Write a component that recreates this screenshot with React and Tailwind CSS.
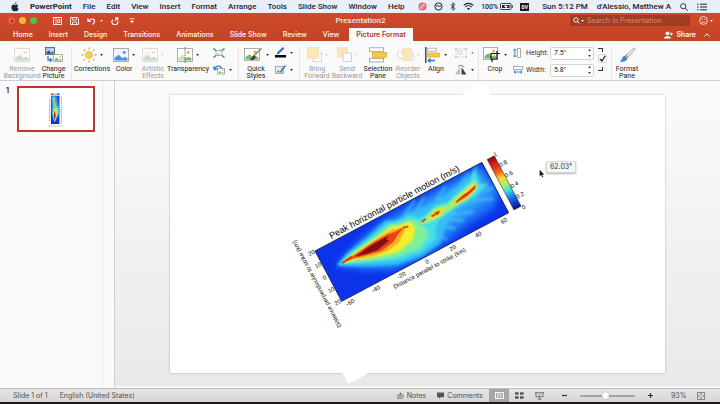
import React, { useState } from "react";

const FONT = "font-['Inter','Liberation_Sans',sans-serif]";

/* ---------- small glyphs ---------- */

function Caret({ className = "" }) {
  return (
    <svg viewBox="0 0 4 3" className={`h-[2px] w-[3px] shrink-0 ${className}`} fill="currentColor" aria-hidden="true">
      <path d="M0 0h4L2 3z" />
    </svg>
  );
}

function Svg({ w, h, className = "", children }) {
  return (
    <svg width={w} height={h} viewBox={`0 0 ${w} ${h}`} className={`shrink-0 ${className}`} fill="none" aria-hidden="true">
      {children}
    </svg>
  );
}

function AppleLogo() {
  return (
    <Svg w={8} h={10}>
      <path
        d="M5.4.3c0 1-.7 1.9-1.7 2C3.600 1.300 4.500.4 5.400.3zM4 2.900c.5 0 .9-.5 1.700-.5.600 0 1.200.3 1.600.8-1.400.9-1.200 2.900.3 3.500-.4 1.200-1.200 2.500-2.100 2.500-.5 0-.8-.3-1.400-.3s-.9.3-1.400.3C1.600 9.200.4 7.200.4 5.300c0-1.800 1.100-2.900 2.200-2.900.6 0 1 .5 1.400.5z"
        fill="#1d2733"
      />
    </Svg>
  );
}

function Landscape({ x = 0, y = 0, w = 15, h = 13, sky = "#fff", hill = "#7db867", sun = "#e9b73c", edge = "#9a9a9a" }) {
  return (
    <g transform={`translate(${x} ${y})`}>
      <rect x=".5" y=".5" width={w - 1} height={h - 1} fill={sky} stroke={edge} strokeWidth=".8" />
      <path d={`M1.500 ${h - 1.5}V${h * 0.7}L${w * 0.36} ${h * 0.48}L${w * 0.58} ${h * 0.74}L${w * 0.76} ${h * 0.62}L${w - 1.5} ${h * 0.76}V${h - 1.5}z`} fill={hill} />
      <circle cx={w * 0.7} cy={h * 0.32} r={w * 0.09} fill={sun} />
    </g>
  );
}

const icons = {
  removeBg: (
    <Svg w={16} h={16}>
      <Landscape y={1} w={16} h={14} />
      <path d="M8 0v16" stroke="#888" strokeWidth=".7" strokeDasharray="1 1" />
    </Svg>
  ),
  change: (
    <Svg w={18} h={16}>
      <Landscape x={0} y={0} w={10} h={8} sky="#9fc6ec" hill="#2b3440" sun="#fff" edge="#555" />
      <Landscape x={8} y={7} w={10} h={8} hill="#69ad52" />
      <path d="M3 9v4h3M4.800 11.200L6.800 13L4.800 14.800" stroke="#2f7fd0" strokeWidth="1.300" />
    </Svg>
  ),
  sun: (
    <Svg w={16} h={16}>
      <circle cx="8" cy="8" r="3.400" fill="#f7cf5f" stroke="#e5ad35" strokeWidth=".8" />
      <g stroke="#e5ad35" strokeWidth="1.300">
        <path d="M8 .5v2M8 13.500v2M.5 8h2M13.500 8h2M2.700 2.700l1.400 1.400M11.900 11.900l1.400 1.400M2.700 13.300l1.400-1.400M11.900 4.100l1.400-1.400" />
      </g>
    </Svg>
  ),
  color: (
    <Svg w={16} h={16}>
      <Landscape y={1} w={16} h={14} sky="#eef5fc" hill="#4a90e2" sun="#4a90e2" />
    </Svg>
  ),
  artistic: (
    <Svg w={16} h={16}>
      <Landscape y={1} w={16} h={14} />
      <path d="M8 0v16M2 6h5M2 8h3" stroke="#888" strokeWidth=".7" strokeDasharray="1 1" />
    </Svg>
  ),
  transparency: (
    <Svg w={16} h={16}>
      <Landscape y={1} w={16} h={14} />
      <rect x="1" y="2" width="7" height="12" fill="#fff" opacity=".6" />
      <path d="M8 0v16" stroke="#444" strokeWidth=".8" strokeDasharray="1.500 1" />
    </Svg>
  ),
  compress: (
    <Svg w={12} h={10}>
      <Landscape x={2.5} y={2} w={7} h={6} />
      <path d="M.5.500l2.500 2M11.500.500L9 2.500M.5 9.500L3 7.500M11.500 9.500L9 7.500" stroke="#2f74b8" strokeWidth="1.200" />
    </Svg>
  ),
  reset: (
    <Svg w={12} h={11}>
      <Landscape x={4} y={4} w={8} h={6.5} />
      <path d="M1.500 5.500C2 1.800 7 .8 8.500 4M.5 2.500l1 3.300 3-1.300" stroke="#2f7fd0" strokeWidth="1.300" />
    </Svg>
  ),
  quick: (
    <Svg w={19} h={16}>
      <Landscape y={1} w={16} h={13} />
      <path d="M17.500 1.500L9.500 9" stroke="#8c8c8c" strokeWidth="1.700" />
      <path d="M10.200 8.200c-2 .2-2 3.200-4.700 4.500 2.600 1 6 0 6.200-3z" fill="#3b3f46" />
    </Svg>
  ),
  border: (
    <Svg w={11} h={11}>
      <path d="M8.700.8L3 6" stroke="#2f74b8" strokeWidth="2.200" />
      <path d="M3.500 5L1.500 7.500l2.800-1z" fill="#333" />
      <rect y="8" width="11" height="2.500" fill="#050505" />
    </Svg>
  ),
  effects: (
    <Svg w={11} h={11}>
      <Landscape x={0} y={2} w={9} h={8} sky="#e4effa" />
      <path d="M10.500 1.500L5.500 8" stroke="#3d78b3" strokeWidth="1.500" />
    </Svg>
  ),
  bring: (
    <Svg w={15} h={15}>
      <rect x="6" y="6" width="8.500" height="8.500" fill="#fff" stroke="#888" strokeWidth=".8" />
      <rect x=".5" y=".5" width="11" height="11" fill="#f6cf5a" stroke="#e2b13c" strokeWidth=".6" />
    </Svg>
  ),
  send: (
    <Svg w={15} h={15}>
      <rect x=".5" y=".5" width="10" height="10" fill="#f6cf5a" stroke="#e2b13c" strokeWidth=".6" />
      <rect x="6" y="6" width="8.500" height="8.500" fill="#fff" stroke="#777" strokeWidth=".8" />
    </Svg>
  ),
  selection: (
    <Svg w={18} h={16}>
      <rect x=".5" y=".8" width="14" height="3.500" fill="#fff" stroke="#999" strokeWidth=".8" />
      <rect x=".5" y="11.500" width="14" height="3.500" fill="#fff" stroke="#999" strokeWidth=".8" />
      <rect x="3.500" y="5.300" width="14" height="5" fill="#f6c948" stroke="#dda52a" strokeWidth=".7" />
    </Svg>
  ),
  reorder: (
    <Svg w={17} h={16}>
      <rect x=".5" y="4.500" width="8" height="7" rx="2" fill="#fff" stroke="#888" strokeWidth=".8" />
      <rect x="13" y="5" width="3.500" height="8" fill="#fff" stroke="#888" strokeWidth=".7" />
      <rect x="5.500" y="1.500" width="9" height="12" fill="#f6cf5a" stroke="#e2b13c" strokeWidth=".6" />
    </Svg>
  ),
  align: (
    <Svg w={16} h={16}>
      <path d="M.8 0v16" stroke="#222" strokeWidth="1.200" />
      <rect x="2.500" y="1.200" width="9" height="3" fill="#fff" stroke="#aaa" strokeWidth=".8" />
      <rect x="2.500" y="6" width="12" height="4" fill="#f6c948" stroke="#dda52a" strokeWidth=".6" />
      <path d="M10 13.500H3.500M5.500 11.500l-2.300 2 2.300 2" stroke="#2f7fd0" strokeWidth="1.300" />
    </Svg>
  ),
  group: (
    <Svg w={12} h={10}>
      <rect x="1" y="1" width="10" height="8" stroke="#888" strokeWidth=".8" strokeDasharray="1.500 1" />
      <rect x="3" y="3" width="4" height="3" stroke="#888" strokeWidth=".7" />
      <path d="M0 0h2v2H0zM10 0h2v2h-2zM0 8h2v2H0zM10 8h2v2h-2z" fill="#999" />
    </Svg>
  ),
  rotate: (
    <Svg w={12} h={10}>
      <path d="M0 9.500h5V2z" fill="#b9bcc0" />
      <path d="M6.500 9.500h5L6.500 2z" fill="#3d4248" />
      <path d="M3 1.500C5 0 7.500 0 9 2" stroke="#2f7fd0" strokeWidth=".9" />
    </Svg>
  ),
  crop: (
    <Svg w={18} h={17}>
      <Landscape y={1} w={15} h={13} />
      <path d="M7.500 7.500h9.500M8 7v6h6V5M9 13v3" stroke="#111" strokeWidth="1.200" />
    </Svg>
  ),
  heightArrow: (
    <Svg w={8} h={10}>
      <path d="M1.800 1v8M.3 2.600L1.800.9l1.500 1.700M.3 7.400l1.500 1.700 1.500-1.700" stroke="#2f74b8" strokeWidth=".9" />
      <rect x="4.500" y=".5" width="3" height="9" fill="#fff" stroke="#999" strokeWidth=".8" />
    </Svg>
  ),
  widthArrow: (
    <Svg w={10} h={8}>
      <rect x=".5" y=".5" width="9" height="3" fill="#fff" stroke="#999" strokeWidth=".8" />
      <path d="M1 6h8M2.600 4.500L.9 6l1.700 1.500M7.400 4.500L9.100 6 7.400 7.500" stroke="#2f74b8" strokeWidth=".9" />
    </Svg>
  ),
  brush: (
    <Svg w={17} h={16}>
      <path d="M15.500.8c1 .5.600 1.500-1 3.300L9.300 10 7 8z" fill="#eef1f4" stroke="#84888d" strokeWidth=".7" />
      <path d="M7.200 7.500l2.500 2.300-1.500 1.500L5.500 9z" fill="#e6a23c" />
      <path d="M5.600 8.700l2.800 2.600C8.200 14 4 15.600.8 14.600 3.300 13.400 2.700 9.500 5.600 8.700z" fill="#3f86d0" />
    </Svg>
  ),
};

/* ---------- plot ---------- */

const JET = [
  ["0", "#8a0d0a"],
  ["0.12", "#d91c12"],
  ["0.28", "#f9571a"],
  ["0.4", "#fbd92b"],
  ["0.54", "#a5f26a"],
  ["0.66", "#35dcf2"],
  ["0.8", "#1769f5"],
  ["1", "#06108f"],
];

const X_TICKS = ["-60", "-40", "-20", "0", "20", "40", "60"];
const Y_TICKS = ["20", "10", "0", "10", "20"];
const SCALE_TICKS = ["1", "0.8", "0.6", "0.4", "0.2", "0"];

function PlotLabels() {
  return (
    <>
      <text x="93" y="-3" fontSize="9" textAnchor="middle">Peak horizontal particle motion (m/s)</text>
      <g fontSize="6" textAnchor="middle">
        {X_TICKS.map((t, i) => (
          <text key={t} x={7 + i * 29} y="64">{t}</text>
        ))}
        <text x="93" y="71">Distance parallel to strike (km)</text>
        {Y_TICKS.map((t, i) => (
          <text key={i} x="-4" y={2 + i * 14}>{t}</text>
        ))}
        <text transform="translate(-12 30) rotate(-90)">Distance perpendicular to strike (km)</text>
      </g>
      <g fontSize="6">
        {SCALE_TICKS.map((t, i) => (
          <text key={t} x="203" y={1 + i * 12}>{t}</text>
        ))}
      </g>
    </>
  );
}

/* At thumbnail size the labels are only specks. */
function PlotSpecks() {
  return (
    <g stroke="#333" strokeWidth="5" strokeDasharray="7 6" opacity=".7">
      <path d="M20 -10H166" />
      <path d="M4 70H182" />
      <path d="M-14 -14V74" />
    </g>
  );
}

function MotionPlot({ id, labelled }) {
  return (
    <g fontFamily="'Liberation Sans', sans-serif" fill="#050505">
      <defs>
        <clipPath id={`${id}-clip`}>
          <rect width="189" height="57" />
        </clipPath>
        <linearGradient id={`${id}-jet`} x1="0" y1="0" x2="0" y2="1">
          {JET.map(([o, c]) => (
            <stop key={o} offset={o} stopColor={c} />
          ))}
        </linearGradient>
        <filter id={`${id}-b5`} x="-30%" y="-60%" width="160%" height="220%">
          <feGaussianBlur stdDeviation="3.500" />
        </filter>
        <filter id={`${id}-b2`} x="-30%" y="-60%" width="160%" height="220%">
          <feGaussianBlur stdDeviation="1.600" />
        </filter>
        <filter id={`${id}-b1`} x="-30%" y="-60%" width="160%" height="220%">
          <feGaussianBlur stdDeviation="1" />
        </filter>
        <filter id={`${id}-b0`} x="-30%" y="-60%" width="160%" height="220%">
          <feGaussianBlur stdDeviation=".4" />
        </filter>
      </defs>
      <rect x="-33" y="-69" width="262" height="202" fill="#fff" />

      <g clipPath={`url(#${id}-clip)`}>
        <rect width="189" height="57" fill="#0c32ea" />
        <g filter={`url(#${id}-b5)`}>
          <path d="M12 23L40 12L72 5L100 3L130 3L160 2L186 1L192 34L178 46L150 48L125 53L95 57L60 54L35 40z" fill="#1b74f7" />
          <path d="M100 12L130 8L160 8L184 6L184 32L160 38L130 42L104 50z" fill="#2d9df6" />
        </g>
        <g filter={`url(#${id}-b2)`}>
          <path d="M12 23L28 17L52 12L76 6L86 10L104 10L120 13L140 12L158 9L180 5L178 22L166 31L146 30L134 35L124 42L114 52L92 55L66 51L42 40L22 29z" fill="#33bdf7" />
          <path d="M116 30L134 46M122 28L146 43M128 28L158 40M110 32L122 52M160 27L182 38M168 23L187 28" stroke="#41bdf6" strokeWidth="2.400" />
          <path d="M92 12L112 2M100 16L122 4M126 15L146 4M150 14L172 3M172 14L182 1" stroke="#39b6f7" strokeWidth="2.400" />
        </g>
        <g filter={`url(#${id}-b1)`}>
          <path d="M14 23L30 18L56 14L78 9L84 12L100 13L108 20L118 19L128 16L140 19L152 15L168 12L179 2L177 18L185 22L164 27L148 27L134 29L124 31L117 36L113 46L94 51L68 47L46 37L26 28z" fill="#46e0e4" />
          <path d="M17 23L34 19L60 15L79 12L86 15L100 17L108 25L108 40L92 47L68 43L44 35L26 27z" fill="#7cf09a" />
          <path d="M104 26L114 22L126 18.500L138 21L150 18L164 15L175 12L172 21L158 26L142 27L128 28.500L114 28z" fill="#9bf075" />
        </g>
        <g filter={`url(#${id}-b1)`}>
          <path d="M18 23L36 20L60 17L79 14L86 17L97 18L100 26L92 36L74 40L54 35L34 28z" fill="#f5ee2e" />
          <path d="M114 25L124 20.500L135 22L129 27L120 27zM141 24L154 19L172 14.500L174 19L160 25z" fill="#f9e22b" />
        </g>
        <g filter={`url(#${id}-b0)`}>
          <path d="M18 22.500L36 21L58 18.500L78 17L82 19L92 20L88 25L78 32L64 34L50 32L36 27.500L31 24.500z" fill="#fba41c" opacity=".8" />
          <path d="M19 23.500L34 22L56 19.500L72 19.200L79 20.500L90 20.500L82 24L73 29L58 31L42 27.500L32 25z" fill="#ee3f14" />
          <path d="M119 24.500L124 22L130 23L126 25.500zM145 23.500L156 20.500L164 19L173 16.500L171 20L158 23.500z" fill="#ef5a18" />
          <path d="M108 24.500l5-1.200M89 21l5 1M119 24l3 .5M124 24l4-.5M148 23l12-2.500M160 21.500l11-2.500M18 23.500l12-1.500" stroke="#cf2210" strokeWidth="1.300" />
          <path d="M33 23.800L45 22L56 21L72 21L68 23.500L71 25.500L56 28.500L44 26.800z" fill="#860f0c" />
          <path d="M31 25.500l3 4M104 24l5 5M109 28l7 6M115 29l8 7M122 29l9 6" stroke="#2fc8f2" strokeWidth=".8" opacity=".8" />
        </g>
      </g>
      <rect width="189" height="57" fill="none" stroke="#10143c" strokeWidth=".8" />
      <rect x="195" width="8" height="57" fill={`url(#${id}-jet)`} stroke="#222" strokeWidth=".5" />
      {labelled ? <PlotLabels /> : <PlotSpecks />}
    </g>
  );
}

/* ---------- bars ---------- */

function MenuBar() {
  const menus = ["File", "Edit", "View", "Insert", "Format", "Arrange", "Tools", "Slide Show", "Window", "Help"];
  return (
    <header className="flex h-[13px] shrink-0 items-center justify-between bg-[#e9eff6] pl-[11px] pr-[13px] font-['Roboto','Liberation_Sans',sans-serif] text-[8px] leading-[12px] text-[#1c2430]">
      <nav className="flex items-center gap-[11px] whitespace-nowrap" aria-label="Menu bar">
        <AppleLogo />
        <button className="font-bold">PowerPoint</button>
        {menus.map((m) => (
          <button key={m} className="font-medium">{m}</button>
        ))}
      </nav>
      <div className="flex items-center gap-[9px] whitespace-nowrap font-medium">
        <div className="flex items-center gap-[7px] pr-[4px]">
          <Svg w={9} h={9}>
            <circle cx="4.500" cy="4.500" r="4" fill="#e0636a" />
            <path d="M2.500 6.500c0-3 1-4 4-4M4 7c0-2.200.7-3 3-3" stroke="#fff" strokeWidth=".8" />
          </Svg>
          <Svg w={9} h={9}>
            <circle cx="4.500" cy="4.500" r="3.600" stroke="#222" strokeWidth="1" />
            <path d="M2 4c2-1 3 1 5 0" stroke="#222" strokeWidth="1" />
          </Svg>
          <Svg w={6} h={9}>
            <path d="M.8 2.500l4 4L3 8.300V.7l1.800 1.800-4 4" stroke="#222" strokeWidth=".9" />
          </Svg>
          <Svg w={11} h={9}>
            <path d="M.7 3.300c2.700-2.600 7-2.600 9.600 0M2.400 5c1.800-1.700 4.500-1.700 6.200 0" stroke="#222" strokeWidth="1.100" />
            <path d="M3.900 6.400c1-.9 2.300-.9 3.200 0L5.500 8.100z" fill="#222" />
          </Svg>
          <span className="flex items-center gap-[2px]">
            <span className="text-[7px]">100%</span>
            <Svg w={13} h={7}>
              <rect x=".5" y=".5" width="10.500" height="6" rx="1" stroke="#222" strokeWidth=".9" />
              <rect x="2" y="2" width="7.500" height="3" fill="#222" />
              <path d="M12.300 2.300v2.400" stroke="#222" />
              <path d="M6.500 0L4 4h1.600L5 7l3-4H6.200z" fill="#e9eff6" />
            </Svg>
          </span>
          <span className="flex h-[8px] w-[9px] items-center justify-center bg-[#15181d] text-[5px] font-bold text-white">DV</span>
        </div>
        <span>Sun 5:12 PM</span>
        <span>d'Alessio, Matthew A</span>
        <Svg w={8} h={8}>
          <circle cx="3.200" cy="3.200" r="2.600" stroke="#222" strokeWidth=".9" />
          <path d="M5.200 5.200l2.500 2.500" stroke="#222" strokeWidth="1" />
        </Svg>
        <Svg w={10} h={8}>
          <path d="M3 1.200h7M3 4h7M3 6.800h7M0 1.200h1.500M0 4h1.500M0 6.800h1.500" stroke="#222" strokeWidth="1" />
        </Svg>
      </div>
    </header>
  );
}

function TitleBar() {
  return (
    <div className="grid h-[15px] shrink-0 grid-cols-[1fr_auto_1fr] items-center pl-[8px] pr-[7px] text-white">
      <div className="flex items-center">
        <div className="flex gap-[4px]">
          <button aria-label="Close" className="flex h-[7px] w-[7px] items-center justify-center rounded-full bg-[#f0544c]">
            <span className="h-[2px] w-[2px] rounded-full bg-[#7d1610]" />
          </button>
          <button aria-label="Minimise" className="h-[7px] w-[7px] rounded-full bg-[#f5b73c]" />
          <button aria-label="Zoom window" className="h-[7px] w-[7px] rounded-full bg-[#4fc33f]" />
        </div>
        <div className="ml-[16px] flex items-center gap-[8px]">
          <button aria-label="Panel">
            <Svg w={9} h={8}>
              <rect x=".5" y=".5" width="8" height="7" stroke="#fff" strokeWidth=".9" />
              <path d="M3 .5v7M4.800 2.500h2v3h-2z" stroke="#fff" strokeWidth=".8" />
            </Svg>
          </button>
          <button aria-label="Save">
            <Svg w={9} h={8}>
              <path d="M.5.500h7l1 1v6h-8z" stroke="#fff" strokeWidth=".9" />
              <path d="M2.500.500v2.500h4V.500M2.500 7.500V5h4v2.500" stroke="#fff" strokeWidth=".8" />
            </Svg>
          </button>
          <button aria-label="Undo" className="flex items-center gap-[4px]">
            <Svg w={9} h={8}>
              <path d="M1 1.500v3h3M1.300 4.300C3.500 1 7.500 1.500 7.500 4.200c0 1.500-1 2.500-2 3.200" stroke="#fff" strokeWidth="1.200" />
            </Svg>
            <Caret />
          </button>
          <button aria-label="Redo">
            <Svg w={8} h={8}>
              <path d="M1.800 2.700A3 3 0 1 0 6.800 4M4 .7h2.700v2.600M6.500 1L4 3.500" stroke="#fff" strokeWidth="1.100" />
            </Svg>
          </button>
          <button aria-label="Customise toolbar" className="ml-[2px]">
            <Svg w={6} h={6}>
              <path d="M.5.800h5" stroke="#fff" strokeWidth=".8" />
              <path d="M1 2.800h4L3 5.200z" fill="#fff" />
            </Svg>
          </button>
        </div>
      </div>
      <h1 className="font-['Roboto','Liberation_Sans',sans-serif] text-[8px] leading-[12px] font-medium text-[#fbe6e0]">Presentation2</h1>
      <div className="flex items-center justify-end gap-[9px]">
        <label className="flex h-[11px] w-[120px] items-center gap-px bg-[#a33b22] pl-[3px]">
          <Svg w={7} h={7}>
            <circle cx="2.900" cy="2.900" r="2.200" stroke="#fff" strokeWidth=".9" />
            <path d="M4.500 4.500l2 2" stroke="#fff" strokeWidth=".9" />
          </Svg>
          <Caret />
          <input
            type="search"
            aria-label="Search in Presentation"
            placeholder="Search in Presentation"
            className="ml-[2px] min-w-0 flex-1 bg-transparent text-[7px] leading-[10px] text-white outline-none placeholder:text-[#d68d7b]"
          />
        </label>
        <button aria-label="Feedback" className="flex items-center gap-[2px]">
          <Svg w={9} h={9}>
            <circle cx="4.500" cy="4.500" r="3.900" stroke="#fff" strokeWidth=".8" />
            <path d="M2.700 5.500c.8 1.300 2.800 1.300 3.600 0M3.200 3v1M5.800 3v1" stroke="#fff" strokeWidth=".8" />
          </Svg>
          <Caret />
        </button>
      </div>
    </div>
  );
}

function TabStrip({ active, onSelect }) {
  const tabs = ["Home", "Insert", "Design", "Transitions", "Animations", "Slide Show", "Review", "View", "Picture Format"];
  return (
    <div className="flex h-[13px] shrink-0 items-stretch justify-between pl-[5px] pr-[10px] text-[7px] leading-[12px] font-medium text-[#fff6f3]">
      <div role="tablist" className="flex whitespace-nowrap">
        {tabs.map((t) => (
          <button
            key={t}
            role="tab"
            aria-selected={t === active}
            onClick={() => onSelect(t)}
            className={t === active ? "ml-[2px] bg-[#fafafa] px-[7px] font-semibold text-[#b7371c]" : "px-[8px]"}
          >
            {t}
          </button>
        ))}
      </div>
      <div className="flex items-center gap-[8px] font-semibold">
        <button className="flex items-center gap-[3px]">
          <Svg w={9} h={8}>
            <circle cx="3.500" cy="2.300" r="1.900" fill="#fff" />
            <path d="M0 7.500c0-3.500 7-3.500 7 0z" fill="#fff" />
            <path d="M7.300 1.500v3M5.800 3h3" stroke="#fff" strokeWidth=".9" />
          </Svg>
          Share
        </button>
        <button aria-label="Collapse ribbon">
          <Svg w={6} h={4}>
            <path d="M.5 3.300L3 .9l2.500 2.400" stroke="#fff" strokeWidth="1" />
          </Svg>
        </button>
      </div>
    </div>
  );
}

/* ---------- ribbon ---------- */

function Tool({ icon, label, width, caret, disabled }) {
  return (
    <button disabled={disabled} className={`flex flex-col items-center ${width} ${disabled ? "text-[#9a9a9a]" : "text-[#222]"}`}>
      <span className={`flex h-[17px] items-center gap-[3px] ${disabled ? "opacity-40" : ""}`}>
        {icons[icon]}
        {caret && <Caret />}
      </span>
      <span className="mt-[3px] whitespace-pre-line text-center">{label}</span>
    </button>
  );
}

function MiniTools({ width, items }) {
  return (
    <div className={`flex flex-col gap-[6px] pt-px text-[#222] ${width}`}>
      {items.map((it) => (
        <button key={it.icon} aria-label={it.name} disabled={it.disabled} className={`flex h-[11px] items-center gap-[4px] ${it.disabled ? "opacity-50" : ""}`}>
          {icons[it.icon]}
          {it.caret && <Caret />}
        </button>
      ))}
    </div>
  );
}

function Divider({ width }) {
  return (
    <div className={`flex justify-center ${width}`} aria-hidden="true">
      <span className="w-px bg-[#e8e8e8]" />
    </div>
  );
}

function SizeField({ id, icon, label, value, onChange }) {
  return (
    <div className="flex h-[14px] items-center">
      <span className="flex w-[13px] items-center">{icons[icon]}</span>
      <label htmlFor={id} className="w-[24px]">{label}</label>
      <div className="flex h-[13px] w-[44px] items-center justify-between rounded-[2px] border border-[#d4d4d4] bg-white pl-[3px] pr-[2px]">
        <input id={id} value={value} onChange={(e) => onChange(e.target.value)} className="w-[26px] bg-transparent text-[7px] text-[#222] outline-none" />
        <span className="flex flex-col gap-[4px] text-[#333]" aria-hidden="true">
          <Caret className="rotate-180" />
          <Caret />
        </span>
      </div>
    </div>
  );
}

function Ribbon() {
  const [height, setHeight] = useState('7.5"');
  const [width, setWidth] = useState('5.8"');
  return (
    <div className="flex h-[40px] shrink-0 items-stretch border-b border-[#cfcfcf] bg-[#fafafa] pt-[5px] pl-[4px] font-['Roboto','Liberation_Sans',sans-serif] text-[7px] leading-[7px]">
      <Tool icon="removeBg" label={"Remove\nBackground"} width="w-[36px]" disabled />
      <Tool icon="change" label={"Change\nPicture"} width="w-[27px]" />
      <Divider width="w-[8px]" />
      <Tool icon="sun" label="Corrections" width="w-[34px]" caret />
      <Tool icon="color" label="Color" width="w-[30px]" caret />
      <Tool icon="artistic" label={"Artistic\nEffects"} width="w-[28px]" caret disabled />
      <Tool icon="transparency" label="Transparency" width="w-[42px]" caret />
      <MiniTools
        width="w-[24px] pl-[4px]"
        items={[
          { icon: "compress", name: "Compress Pictures" },
          { icon: "reset", name: "Reset Picture", caret: true },
        ]}
      />
      <Divider width="w-[10px]" />
      <Tool icon="quick" label={"Quick\nStyles"} width="w-[26px]" caret />
      <MiniTools
        width="w-[26px] pl-[6px]"
        items={[
          { icon: "border", name: "Picture Border", caret: true },
          { icon: "effects", name: "Picture Effects", caret: true },
        ]}
      />
      <Divider width="w-[8px]" />
      <Tool icon="bring" label={"Bring\nForward"} width="w-[28px]" caret disabled />
      <Tool icon="send" label={"Send\nBackward"} width="w-[32px]" caret disabled />
      <Tool icon="selection" label={"Selection\nPane"} width="w-[30px]" />
      <Tool icon="reorder" label={"Reorder\nObjects"} width="w-[30px]" caret disabled />
      <Tool icon="align" label="Align" width="w-[26px]" caret />
      <MiniTools
        width="w-[26px] pl-[6px]"
        items={[
          { icon: "group", name: "Group", caret: true, disabled: true },
          { icon: "rotate", name: "Rotate", caret: true },
        ]}
      />
      <Divider width="w-[6px]" />
      <Tool icon="crop" label="Crop" width="w-[28px]" caret />
      <div className="ml-[4px] flex flex-col gap-[3px] text-[#333]">
        <SizeField id="pic-height" icon="heightArrow" label="Height:" value={height} onChange={setHeight} />
        <SizeField id="pic-width" icon="widthArrow" label="Width:" value={width} onChange={setWidth} />
      </div>
      <div className="ml-[2px] flex w-[11px] flex-col items-end gap-px pt-[2px]">
        <span className="mr-[4px] h-[4px] w-[5px] border-t border-r border-[#333]" />
        <label className="mt-px flex h-[9px] w-[9px] items-center justify-center rounded-[2px] border border-[#d4d4d4] bg-white">
          <input type="checkbox" defaultChecked aria-label="Lock aspect ratio" className="peer sr-only" />
          <Svg w={7} h={7} className="invisible peer-checked:visible">
            <path d="M1 3.800L3 6L6.300.8" stroke="#111" strokeWidth="1.200" />
          </Svg>
        </label>
        <span className="mt-[3px] mr-[4px] h-[4px] w-[5px] border-r border-b border-[#333]" />
      </div>
      <Divider width="w-[8px]" />
      <Tool icon="brush" label={"Format\nPane"} width="w-[24px]" />
    </div>
  );
}

/* ---------- workspace ---------- */

function Thumbnails() {
  return (
    <aside className="flex w-[115px] shrink-0 border-r border-[#cfcfcf] bg-[#fafafa]">
      <ol className="flex-1 border-r border-[#ececec] pt-[5px] pl-[6px]">
        <li className="flex items-start gap-[6px]">
          <span className="w-[5px] text-[7px] leading-[10px] font-bold text-[#333]">1</span>
          <button aria-label="Slide 1" className="h-[46px] w-[78px] border-2 border-[#b8392a] bg-white">
            <svg viewBox="0 0 74 42" className="h-full w-full" aria-hidden="true">
              <g transform="translate(32 36) rotate(-90) scale(.15)">
                <MotionPlot id="thumb" />
              </g>
            </svg>
          </button>
        </li>
      </ol>
      <div className="w-[11px]" />
    </aside>
  );
}

function SlideCanvas() {
  return (
    <main className="min-w-0 flex-1 border-b-2 border-[#f8f8f8] bg-linear-to-b from-[#fbfbfb] to-[#e9e9e9] px-[55px] pt-[14px]">
      <div className="relative aspect-[495/278] bg-white shadow-[0_0_2px_rgba(0,0,0,0.3)]">
        <svg viewBox="0 0 495 278" className="block h-full w-full overflow-visible" role="img" aria-label="Peak horizontal particle motion plot">
          <rect width="495" height="278" fill="#fff" />
          <g transform="translate(145 156) rotate(-27.970)">
            <MotionPlot id="slide" labelled />
          </g>
        </svg>
        <div className="absolute top-[66px] left-[376px] rounded-[2px] border border-[#d6d6d6] bg-[#f6f6f6] px-[3px] text-[7px] leading-[10px] text-[#333] shadow-[0_1px_2px_rgba(0,0,0,0.3)]">
          62.03°
        </div>
        <svg viewBox="0 0 6 9" className="absolute top-[74px] left-[369px] h-[9px] w-[6px]" aria-hidden="true">
          <path d="M.5.500v7l1.600-1.400 1.100 2.500 1.200-.6-1.100-2.300h2.200z" fill="#111" stroke="#fff" strokeWidth=".3" />
        </svg>
      </div>
    </main>
  );
}

function StatusBar() {
  const [zoom, setZoom] = useState(46);
  return (
    <footer className="flex h-[14px] shrink-0 items-center justify-between border-t border-[#bdbdbd] bg-linear-to-b from-[#e6e6e6] to-[#d6d6d6] pl-[13px] pr-[15px] text-[7px] leading-[10px] text-[#505050]">
      <div className="flex gap-[12px]">
        <span>Slide 1 of 1</span>
        <span>English (United States)</span>
      </div>
      <div className="flex h-full items-center">
        <button className="flex items-center gap-[3px]">
          <Svg w={7} h={7}>
            <path d="M0 3.200h7M0 5h7M0 6.700h5" stroke="#555" strokeWidth=".7" />
            <path d="M2 2.300L3.500.5 5 2.300z" fill="#555" />
          </Svg>
          Notes
        </button>
        <button className="ml-[11px] flex items-center gap-[3px]">
          <Svg w={7} h={7}>
            <path d="M0 .5h7v4.700H3.500L2 6.900V5.200H0z" fill="#555" />
          </Svg>
          Comments
        </button>
        <button aria-label="Normal view" className="ml-[6px] flex h-full w-[20px] items-center justify-center bg-[#a6a6a6]">
          <Svg w={9} h={7}>
            <rect x=".5" y=".5" width="8" height="6" stroke="#fff" strokeWidth=".9" />
            <path d="M2.800.5v6M4.300 2.500h2.500M4.300 4.300h2.500" stroke="#fff" strokeWidth=".8" />
          </Svg>
        </button>
        <button aria-label="Slide sorter" className="ml-[6px]">
          <Svg w={9} h={7}>
            <path d="M0 .3h3.600v2.500H0zM5 .3h3.600v2.500H5zM0 4.200h3.600v2.500H0zM5 4.200h3.600v2.500H5z" fill="#555" />
          </Svg>
        </button>
        <button aria-label="Slide show" className="ml-[11px]">
          <Svg w={9} h={8}>
            <path d="M0 .7h9M1 .7v4h7v-4M4.500 4.700v2M2.500 7.200h4" stroke="#555" strokeWidth=".8" />
            <path d="M3.500 2.600h2" stroke="#555" strokeWidth=".7" />
          </Svg>
        </button>
        <button aria-label="Zoom out" className="ml-[18px]">
          <Svg w={5} h={5}>
            <path d="M0 2.500h5" stroke="#333" strokeWidth="1.200" />
          </Svg>
        </button>
        <input
          type="range"
          aria-label="Zoom"
          value={zoom}
          onChange={(e) => setZoom(Number(e.target.value))}
          className="ml-[13px] h-[2px] w-[55px] appearance-none rounded-full bg-[#a3a3a3] [&::-webkit-slider-thumb]:h-[7px] [&::-webkit-slider-thumb]:w-[7px] [&::-webkit-slider-thumb]:appearance-none [&::-webkit-slider-thumb]:rounded-full [&::-webkit-slider-thumb]:bg-white [&::-webkit-slider-thumb]:shadow-[0_0_1px_rgba(0,0,0,0.5)]"
        />
        <button aria-label="Zoom in" className="ml-[13px]">
          <Svg w={5} h={5}>
            <path d="M0 2.500h5M2.500 0v5" stroke="#333" strokeWidth="1.200" />
          </Svg>
        </button>
        <span className="ml-[18px] w-[15px]">93%</span>
        <button aria-label="Fit slide to window" className="ml-[11px]">
          <Svg w={8} h={8}>
            <rect x=".5" y=".5" width="7" height="7" stroke="#666" strokeWidth=".7" />
            <path d="M4 1v2M4 5v2M1 4h2M5 4h2" stroke="#666" strokeWidth=".9" />
          </Svg>
        </button>
      </div>
    </footer>
  );
}

export default function App() {
  const [tab, setTab] = useState("Picture Format");
  return (
    <div className={`flex min-h-screen flex-col overflow-hidden bg-[#1e1a1c] pb-[2px] ${FONT}`}>
      <MenuBar />
      <div className="shrink-0 bg-linear-to-b from-[#cf4a2b] to-[#c14325]">
        <TitleBar />
        <TabStrip active={tab} onSelect={setTab} />
      </div>
      <Ribbon />
      <div className="flex flex-1 items-stretch">
        <Thumbnails />
        <SlideCanvas />
      </div>
      <StatusBar />
    </div>
  );
}
